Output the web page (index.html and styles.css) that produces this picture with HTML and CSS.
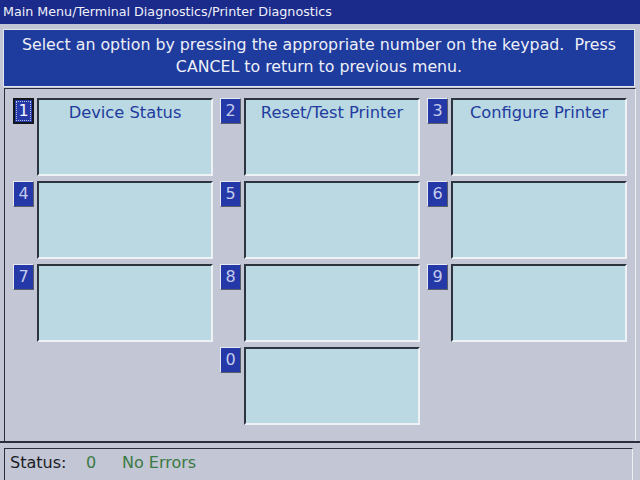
FILE: index.html
```html
<!DOCTYPE html>
<html lang="en">
<head>
    <meta charset="UTF-8">
    <title>Printer Diagnostics</title>
    <link rel="stylesheet" href="styles.css">
</head>
<body>
    <div class="title">Main Menu/Terminal Diagnostics/Printer Diagnostics</div>
    <div class="prompt">
        Select an option by pressing the appropriate number on the keypad.&nbsp; Press<br>
        CANCEL to return to previous menu.
    </div>
    <div class="frame">
        <div class="grid">
            <div class="cell"><div class="key selected"><span>1</span></div><div class="option">Device Status</div></div>
            <div class="cell"><div class="key"><span>2</span></div><div class="option">Reset/Test Printer</div></div>
            <div class="cell"><div class="key"><span>3</span></div><div class="option">Configure Printer</div></div>
            <div class="cell"><div class="key"><span>4</span></div><div class="option"></div></div>
            <div class="cell"><div class="key"><span>5</span></div><div class="option"></div></div>
            <div class="cell"><div class="key"><span>6</span></div><div class="option"></div></div>
            <div class="cell"><div class="key"><span>7</span></div><div class="option"></div></div>
            <div class="cell"><div class="key"><span>8</span></div><div class="option"></div></div>
            <div class="cell"><div class="key"><span>9</span></div><div class="option"></div></div>
            <div class="cell middle"><div class="key"><span>0</span></div><div class="option"></div></div>
        </div>
    </div>
    <div class="statusbar">
        <div class="status">
            <span class="label">Status:</span>
            <span class="code">0</span>
            <span class="msg">No Errors</span>
        </div>
    </div>
</body>
</html>
```

FILE: styles.css
```css
body {
    margin: 0;
    width: 640px;
    height: 480px;
    overflow: hidden;
    background-color: #c3c6d4;
    font-family: "DejaVu Sans", Verdana, sans-serif;
}
.title {
    height: 24px;
    line-height: 24px;
    padding-left: 3px;
    background-color: #1a2b8c;
    color: #f0f0f8;
    font-size: 12.7px;
}
.prompt {
    margin: 5px 5px 0 3px;
    height: 52px;
    border: 1px solid #e4e6ee;
    background-color: #1e3b9e;
    color: #eef0f8;
    font-size: 15.8px;
    line-height: 22px;
    text-align: center;
    padding-top: 4px;
}
.frame {
    margin: 1px 4px 0 4px;
    height: 353px;
    box-sizing: border-box;
    border-top: 1px solid #2a2e3a;
    border-left: 1px solid #2a2e3a;
    border-right: 1px solid #eceef4;
    padding: 9px 0 0 8px;
}
.grid {
    display: grid;
    grid-template-columns: repeat(3, 200px);
    grid-auto-rows: 78px;
    column-gap: 7px;
    row-gap: 5px;
}
.cell {
    display: flex;
}
.cell.middle {
    grid-column: 2;
}
.key {
    width: 21px;
    height: 26px;
    margin-right: 3px;
    box-sizing: border-box;
    background-color: #2538a8;
    border: 1px solid;
    border-color: #e8eaf2 #5a5e6a #5a5e6a #e8eaf2;
    color: #c4ccea;
    font-size: 16px;
    text-align: center;
    line-height: 24px;
}
.key.selected {
    border: 2px solid #14161e;
    padding: 1px;
}
.key.selected span {
    display: block;
    height: 100%;
    border: 1px dotted #b8c0e0;
    box-sizing: border-box;
    line-height: 18px;
    color: #f4f6ff;
}
.option {
    flex: 1;
    box-sizing: border-box;
    background-color: #bad9e3;
    border: 2px solid;
    border-color: #2c3440 #eef2f4 #eef2f4 #2c3440;
    color: #223c9e;
    font-size: 16.3px;
    text-align: center;
    padding-top: 3px;
}
.statusbar {
    border-top: 2px solid #2a2e3a;
    padding: 5px 7px 0 4px;
}
.status {
    height: 32px;
    box-sizing: border-box;
    border-top: 1px solid #2a2e3a;
    border-left: 1px solid #2a2e3a;
    border-right: 1px solid #eceef4;
    font-size: 16px;
    line-height: 28px;
    padding-left: 5px;
    display: flex;
}
.label {
    color: #1a1c24;
    width: 76px;
}
.code {
    color: #3a7a44;
    width: 36px;
}
.msg {
    color: #3a7a44;
}
```
